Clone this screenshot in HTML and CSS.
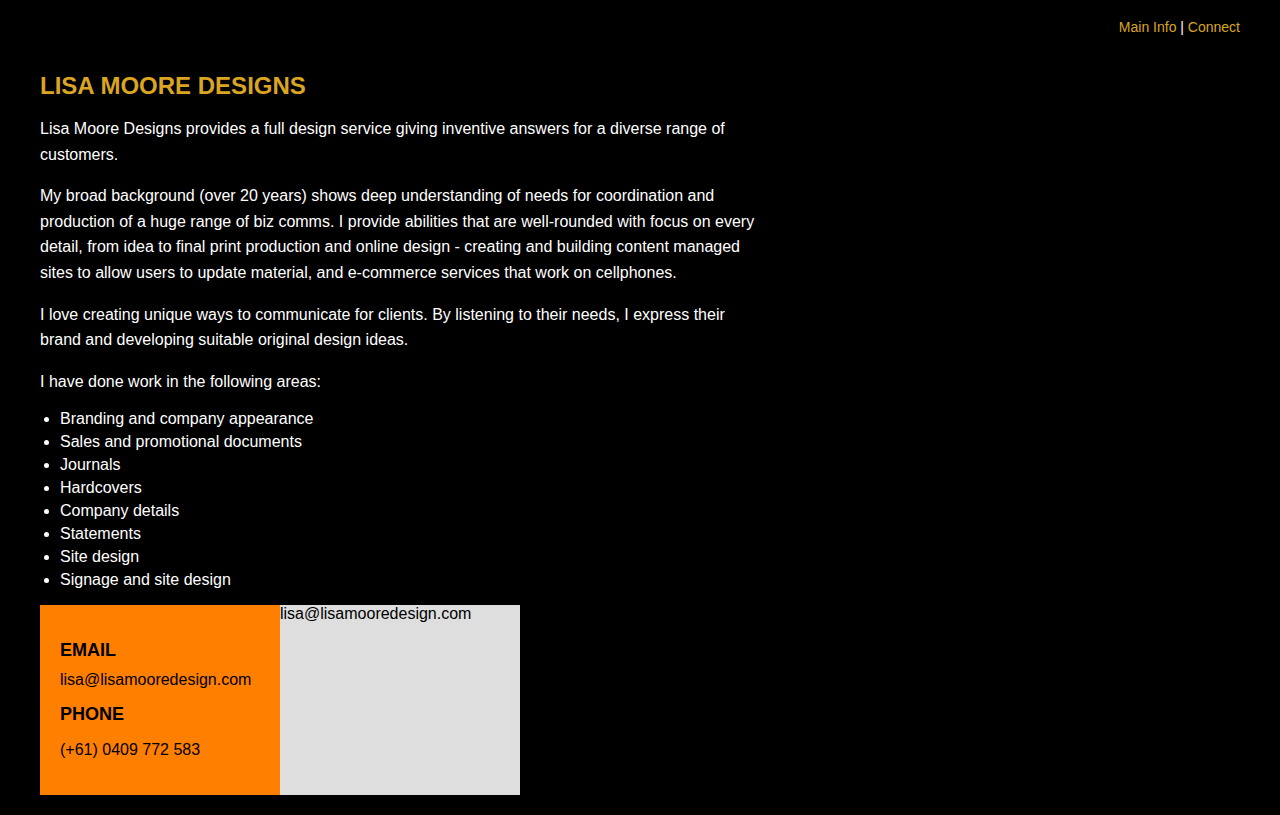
FILE: index.html
```html
<!DOCTYPE html>
<html lang="en">
<head>
<meta charset="utf-8">
<title>Lisa Moore Designs</title>
<link rel="stylesheet" href="styles.css">
</head>
<body>
<div class="page">
  <nav class="topnav"><a href="#">Main Info</a> | <a href="#">Connect</a></nav>
  <main class="content">
    <h1 class="title">LISA MOORE DESIGNS</h1>
    <p>Lisa Moore Designs provides a full design service giving inventive answers for a diverse range of customers.</p>
    <p>My broad background (over 20 years) shows deep understanding of needs for coordination and production of a huge range of biz comms. I provide abilities that are well-rounded with focus on every detail, from idea to final print production and online design - creating and building content managed sites to allow users to update material, and e-commerce services that work on cellphones.</p>
    <p>I love creating unique ways to communicate for clients. By listening to their needs, I express their brand and developing suitable original design ideas.</p>
    <p class="lead-in">I have done work in the following areas:</p>
    <ul class="areas">
      <li>Branding and company appearance</li>
      <li>Sales and promotional documents</li>
      <li>Journals</li>
      <li>Hardcovers</li>
      <li>Company details</li>
      <li>Statements</li>
      <li>Site design</li>
      <li>Signage and site design</li>
    </ul>
    <div class="contact">
      <div class="contact-card">
        <h3 class="contact-head">EMAIL</h3>
        <div class="contact-line">lisa@lisamooredesign.com</div>
        <h3 class="contact-head contact-head-next">PHONE</h3>
        <p class="contact-phone">(+61) 0409 772 583</p>
      </div>
      <div class="contact-side">lisa@lisamooredesign.com</div>
    </div>
  </main>
</div>
</body>
</html>
```
FILE: styles.css
```css
html, body {
  margin: 0;
  padding: 0;
  background: #000;
}
body {
  font-family: "Liberation Sans", Arial, sans-serif;
  color: #fff;
  font-size: 16px;
}
.page {
  padding: 0 40px;
}
.topnav {
  text-align: right;
  font-size: 14px;
  padding-top: 19px;
  line-height: 16px;
  color: #fff;
}
.topnav a {
  color: #daa520;
  text-decoration: none;
}
.content {
  width: 720px;
}
.title {
  color: #daa520;
  font-size: 24px;
  font-weight: bold;
  margin: 37px 0 0;
  line-height: 28px;
}
.content p {
  margin: 16px 0;
  line-height: 25.6px;
}
.content .lead-in {
  margin-bottom: 13px;
}
.areas {
  margin: 0 0 14px;
  padding-left: 20px;
  line-height: 23px;
}
.contact {
  display: flex;
  color: #000;
}
.contact-card {
  width: 200px;
  height: 150px;
  padding: 20px;
  background: #ff7f00;
}
.contact-head {
  margin: 15px 0 0;
  font-size: 18px;
  line-height: 20px;
}
.contact-head-next {
  margin-top: 14px;
}
.contact-line {
  margin-top: 10px;
  line-height: 20px;
}
.content .contact-phone {
  margin: 16px 0 0;
  line-height: 20px;
}
.contact-side {
  width: 240px;
  height: 190px;
  background: #dedede;
  line-height: 18px;
}
```
